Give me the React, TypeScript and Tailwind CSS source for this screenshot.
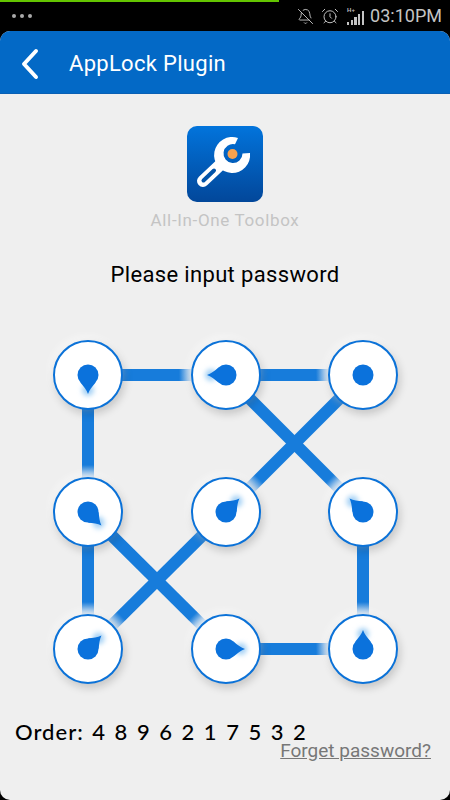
import React from 'react';
import { BellOff, AlarmClock } from 'lucide-react';

// tail angle of each dot, degrees clockwise from "up"; null has no tail
const nodes: (number | null)[] = [180, 270, null, 135, 45, 315, 45, 90, 0];

const segments = [
  [88, 375, 226, 375],
  [226, 375, 363, 375],
  [88, 375, 88, 512],
  [88, 512, 88, 649],
  [226, 375, 363, 512],
  [363, 375, 226, 512],
  [226, 512, 88, 649],
  [88, 512, 226, 649],
  [226, 649, 363, 649],
  [363, 512, 363, 649],
];

function PatternLines() {
  return (
    <svg className="absolute left-0 top-0" width="450" height="800">
      <defs>
        {segments.map(([x1, y1, x2, y2], i) => {
          const len = Math.hypot(x2 - x1, y2 - y1);
          const stop = (len - 47) / len;
          const end = (len - 34) / len;
          return (
            <linearGradient key={i} id={`fade${i}`} gradientUnits="userSpaceOnUse" x1={x1} y1={y1} x2={x2} y2={y2}>
              <stop offset={stop} stopColor="#177cdb" />
              <stop offset={end} stopColor="#177cdb" stopOpacity="0.15" />
            </linearGradient>
          );
        })}
      </defs>
      {segments.map(([x1, y1, x2, y2], i) => (
        <line key={i} x1={x1} y1={y1} x2={x2} y2={y2} stroke={`url(#fade${i})`} strokeWidth="12" />
      ))}
    </svg>
  );
}

function PatternNode({ angle }: { angle: number | null }) {
  return (
    <div className="relative w-[70px] h-[70px] rounded-full bg-white border-[2px] border-[#0b72d8] shadow-[2px_4px_9px_rgba(0,0,0,0.18),-2px_-3px_10px_rgba(255,255,255,0.6)]">
      <svg className="absolute left-[-2px] top-[-2px]" width="70" height="70" viewBox="-35 -35 70 70">
        <defs>
          <filter id="tipBlur" x="-100%" y="-100%" width="300%" height="300%">
            <feGaussianBlur stdDeviation="2.5" />
          </filter>
        </defs>
        {angle !== null && (
          <g transform={`rotate(${angle})`}>
            <circle cx="0" cy="-15" r="6" fill="#a5d1f5" filter="url(#tipBlur)" />
            <path d="M0 -19 C1.4 -15 4.2 -11.5 7.6 -7.5 L-7.6 -7.5 C-4.2 -11.5 -1.4 -15 0 -19 Z" fill="#0b72dc" />
          </g>
        )}
        <circle cx="0" cy="0" r="10.5" fill="#0b72dc" />
      </svg>
    </div>
  );
}

function ToolboxLogo() {
  return (
    <div className="w-[76px] h-[76px] rounded-[10px] bg-gradient-to-b from-[#0274dc] to-[#02479a]">
      <svg width="76" height="76" viewBox="0 0 76 76">
        <path d="M51 12 A18 18 0 1 0 63 27 L55.5 27.5 A9.5 9.5 0 1 1 48 18.2 Z" fill="#fff" />
        <line x1="33" y1="39" x2="16" y2="55" stroke="#fff" strokeWidth="12" strokeLinecap="round" />
        <line x1="16.5" y1="54.5" x2="27" y2="44.5" stroke="#0354a9" strokeWidth="4" strokeLinecap="round" />
        <circle cx="45.5" cy="28" r="5" fill="#f9a24d" />
      </svg>
    </div>
  );
}

function SignalIcon() {
  const bars = [3, 5, 8, 11, 14];
  return (
    <div className="relative w-[18px] h-[18px] flex items-end gap-[1.5px] text-[#bdbdbd]">
      <span className="absolute left-0 top-0 text-[6px] leading-[6px] font-bold font-['Liberation_Sans',sans-serif]">H+</span>
      {bars.map((h, i) => (
        <span key={i} className="w-[2.2px] bg-[#c4c4c4]" style={{ height: h }} />
      ))}
    </div>
  );
}

export default function App() {
  return (
    <div className="relative w-[450px] h-[800px] overflow-hidden bg-black flex flex-col font-['Roboto',sans-serif]">
      <div className="absolute left-0 top-0 w-[279px] h-[2px] bg-[#63c400]" />

      <div className="h-[31px] shrink-0 flex items-center justify-between pl-[12px] pr-[8px] pt-[1px]">
        <div className="flex gap-[4px]">
          <span className="w-[4px] h-[4px] rounded-full bg-[#a9a9a9]" />
          <span className="w-[4px] h-[4px] rounded-full bg-[#a9a9a9]" />
          <span className="w-[4px] h-[4px] rounded-full bg-[#a9a9a9]" />
        </div>
        <div className="flex items-center text-[#c4c4c4]">
          <BellOff className="w-[17px] h-[17px] mr-[7px]" strokeWidth={1.3} />
          <AlarmClock className="w-[18px] h-[18px] mr-[8px]" strokeWidth={1.3} />
          <SignalIcon />
          <span className="ml-[5px] text-[18px] leading-[20px]">03:10PM</span>
        </div>
      </div>

      <div className="flex-1 flex flex-col rounded-[10px] overflow-hidden bg-[#efefef]">
        <div className="h-[63px] shrink-0 flex items-center pt-[3px] bg-[#0369c6] border-b border-[#0a60b4]">
          <svg className="ml-[20px]" width="20" height="32" viewBox="0 0 20 32">
            <polyline points="16,3 4,16 16,29" fill="none" stroke="#fff" strokeWidth="4" strokeLinecap="round" strokeLinejoin="round" />
          </svg>
          <span className="ml-[29px] text-[22px] leading-[28px] tracking-[0.3px] text-white">AppLock Plugin</span>
        </div>

        <div className="flex flex-col items-center pt-[32px]">
          <ToolboxLogo />
          <div className="mt-[7px] text-[17px] leading-[22px] tracking-[0.65px] text-[#c4c4c4]">All-In-One Toolbox</div>
          <div className="mt-[30px] text-[22px] leading-[28px] tracking-[0.35px] text-black">Please input password</div>
        </div>

        <PatternLines />

        <div className="mt-[51px] ml-[53px] grid grid-cols-[repeat(3,70px)] gap-x-[67.5px] gap-y-[67px] w-max">
          {nodes.map((angle, i) => (
            <PatternNode key={i} angle={angle} />
          ))}
        </div>

        <div className="mt-[34px] pl-[15px] text-[22px] leading-[28px] font-medium tracking-[1px] [word-spacing:2px] text-black font-['Lato',sans-serif] whitespace-pre">
          Order: 4 8 9 6 2 1 7 5 3 2
        </div>
        <div className="-mt-[5px] pr-[19px] text-right text-[19px] leading-[20px] text-[#777] underline">Forget password?</div>
      </div>
    </div>
  );
}
